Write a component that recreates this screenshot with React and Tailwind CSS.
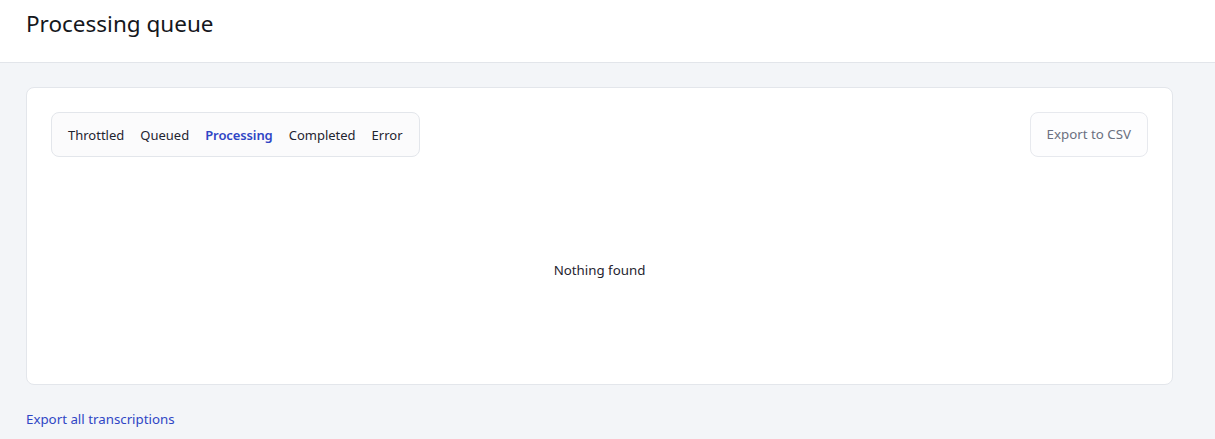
const tabs = ['Throttled', 'Queued', 'Processing', 'Completed', 'Error']

export default function App() {
  const active = 'Processing'

  return (
    <div className="min-h-screen bg-[#f3f5f8] font-['Noto_Sans',sans-serif] text-[#1f2430]">
      {/* Header */}
      <header className="bg-white border-b border-[#e2e5ea] h-[63px] px-[26px] pt-2">
        <h1 className="text-[22.5px] leading-8 font-normal text-[#15171c]">Processing queue</h1>
      </header>

      <main className="pl-[26px] pr-[42px] pt-6">
        <div className="bg-white border border-[#e3e6eb] rounded-lg p-6">
          <div className="flex items-center justify-between">
            <div className="flex items-center bg-[#fbfbfc] border border-[#e3e6eb] rounded-lg p-2 h-[45px]">
              {tabs.map((tab) => (
                <button
                  key={tab}
                  className={`px-2 text-[13px] leading-5 ${
                    tab === active ? 'text-[#2f45c5] font-semibold tracking-[-0.1px]' : 'text-[#1f2430]'
                  }`}
                >
                  {tab}
                </button>
              ))}
            </div>
            <button className="h-[45px] px-4 text-[13.3px] text-[#6b7080] bg-[#fdfdfe] border border-[#e7e9ee] rounded-lg">
              Export to CSV
            </button>
          </div>

          <div className="mt-6 h-[179px] flex items-center justify-center">
            <p className="text-[13.3px] text-[#1f2430]">Nothing found</p>
          </div>
        </div>

        <div className="mt-[21px]">
          <a href="#" className="text-[13.3px] leading-5 text-[#2f45c5]">Export all transcriptions</a>
        </div>
      </main>
    </div>
  )
}
